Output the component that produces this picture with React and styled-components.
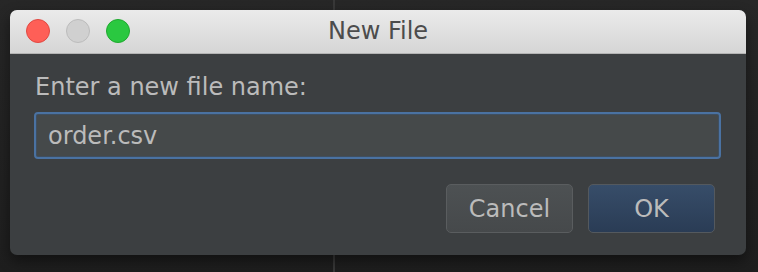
import React from "react";
import styled, { createGlobalStyle } from "styled-components";

const Global = createGlobalStyle`
  html, body {
    margin: 0;
    padding: 0;
    width: 758px;
    height: 272px;
    overflow: hidden;
    background: #242424;
  }
  * { box-sizing: border-box; }
`;

const Desk = styled.div`
  width: 758px;
  height: 272px;
  padding: 10px 12px 17px 10px;
  background:
    linear-gradient(90deg, transparent 333px, #383838 333px, #383838 335px, transparent 335px),
    linear-gradient(180deg, #272727 0%, #1e1e1e 100%);
`;

const Window = styled.div`
  width: 736px;
  height: 245px;
  border-radius: 7px;
  overflow: hidden;
  background: #3c3f41;
  display: flex;
  flex-direction: column;
  box-shadow: 0 6px 14px rgba(0, 0, 0, 0.45);
`;

const TitleBar = styled.div`
  height: 44px;
  flex: none;
  display: grid;
  grid-template-columns: 1fr auto 1fr;
  align-items: center;
  padding: 0 16px;
  background: linear-gradient(180deg, #ebebeb 0%, #d5d5d5 100%);
  border-bottom: 1px solid #b4b4b4;
`;

const Lights = styled.div`
  display: flex;
  gap: 16px;
  align-items: center;
  margin-top: -1px;
`;

const Light = styled.span`
  width: 24px;
  height: 24px;
  border-radius: 50%;
  background: ${(p) => p.$bg};
  border: 1px solid ${(p) => p.$edge};
`;

const Title = styled.div`
  font-family: "DejaVu Sans", sans-serif;
  font-size: 24px;
  line-height: 28px;
  color: #4c4c4c;
  margin-top: -1px;
`;

const Body = styled.div`
  flex: 1;
  display: flex;
  flex-direction: column;
  padding: 19px 25px 0 24px;
`;

const Label = styled.div`
  font-family: "DejaVu Sans", sans-serif;
  font-size: 24px;
  line-height: 28px;
  color: #bbbbbb;
  margin-left: 1px;
`;

const Field = styled.div`
  margin-top: 11px;
  height: 47px;
  border: 2px solid #4a72a2;
  border-radius: 4px;
  background: #45494a;
  box-shadow: inset 0 0 0 1px #3f4f60;
  padding: 8px 12px 0 12px;
  font-family: "DejaVu Sans", sans-serif;
  font-size: 24px;
  line-height: 28px;
  color: #bbbbbb;
`;

const Actions = styled.div`
  margin-top: 25px;
  display: flex;
  justify-content: flex-end;
  gap: 15px;
  padding-right: 6px;
`;

const Button = styled.div`
  width: 127px;
  height: 49px;
  border-radius: 5px;
  border: 1px solid ${(p) => (p.$primary ? "#54595e" : "#5a5d5f")};
  background: ${(p) =>
    p.$primary
      ? "linear-gradient(180deg, #374d69 0%, #2a3c55 100%)"
      : "linear-gradient(180deg, #4d5153 0%, #46494b 100%)"};
  display: flex;
  align-items: center;
  justify-content: center;
  font-family: "DejaVu Sans", sans-serif;
  font-size: 24px;
  line-height: 28px;
  color: #bbbbbb;
`;

export default function App() {
  return (
    <>
      <Global />
      <Desk>
        <Window>
          <TitleBar>
            <Lights>
              <Light $bg="#fe5f57" $edge="#e14942" />
              <Light $bg="#d0d0d0" $edge="#bcbcbc" />
              <Light $bg="#2ac840" $edge="#1fa92f" />
            </Lights>
            <Title>New File</Title>
            <span />
          </TitleBar>
          <Body>
            <Label>Enter a new file name:</Label>
            <Field>order.csv</Field>
            <Actions>
              <Button>Cancel</Button>
              <Button $primary>OK</Button>
            </Actions>
          </Body>
        </Window>
      </Desk>
    </>
  );
}
